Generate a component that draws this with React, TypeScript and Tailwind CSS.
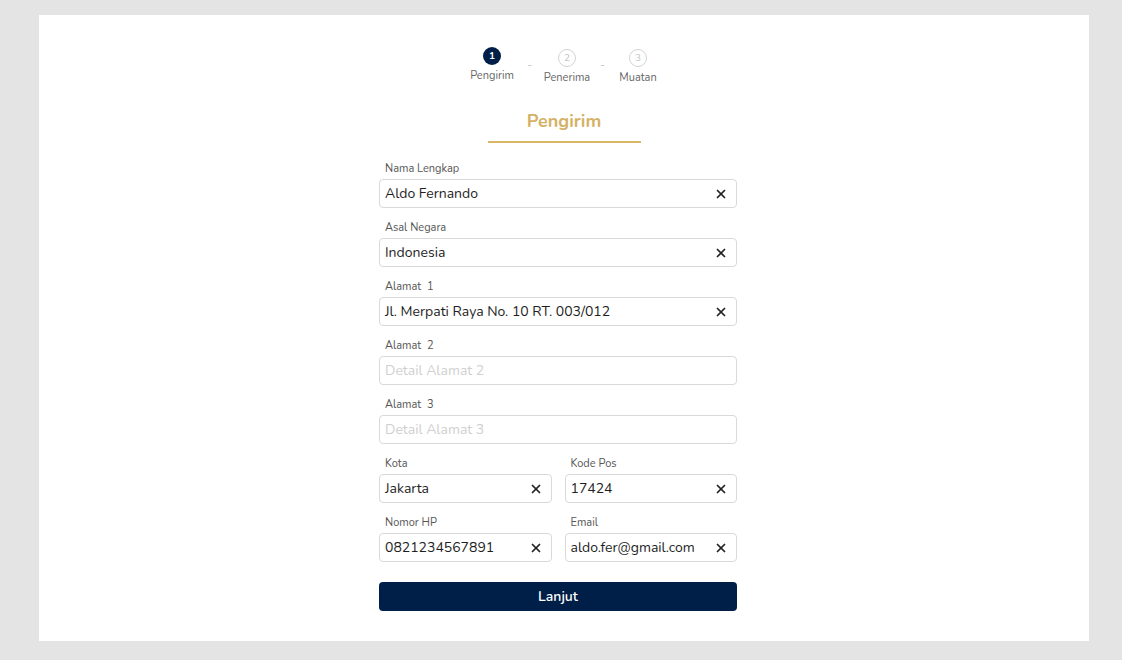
import { X } from 'lucide-react';

type Field = { label: string; value?: string; placeholder?: string };

const steps = [
  { n: 1, label: 'Pengirim', active: true },
  { n: 2, label: 'Penerima', active: false },
  { n: 3, label: 'Muatan', active: false },
];

function Input({ label, value, placeholder }: Field) {
  return (
    <div className="flex flex-col">
      <div className="h-[16px] whitespace-pre pl-[6px] text-[11px] leading-[16px] text-[#555]">{label}</div>
      <div className="mt-[2px] flex h-[29px] items-center rounded-[4px] border border-[#d9d9d9] bg-white pl-[5px] pr-[8px]">
        {value ? (
          <>
            <span className="flex-1 text-[14px] text-[#1e1e1e]">{value}</span>
            <X size={14} strokeWidth={3} className="text-[#222]" />
          </>
        ) : (
          <span className="flex-1 text-[14px] text-[#d0d0d0]">{placeholder}</span>
        )}
      </div>
    </div>
  );
}

export default function App() {
  return (
    <div className="min-h-[660px] w-full bg-[#e4e4e4] pl-[39px] pr-[33px] pt-[15px] pb-[19px] font-['Nunito','Lato',sans-serif]">
      <div className="flex h-[626px] flex-col items-center bg-white pt-[32px]">
        {/* Stepper */}
        <div className="ml-[2px] flex items-start">
          {steps.map((s, i) => (
            <div key={s.n} className="flex items-start">
              {i > 0 && (
                <div className={`${i === 1 ? 'w-[15px]' : 'w-[11px]'} pt-[11px] text-center text-[11px] text-[#c8c8c8]`}>-</div>
              )}
              <div className={`flex w-[60px] flex-col items-center ${s.active ? '' : 'mt-[2px]'}`}>
                {s.active ? (
                  <div className="flex h-[18px] w-[18px] items-center justify-center rounded-full bg-[#001f48] text-[10px] font-bold text-white">
                    {s.n}
                  </div>
                ) : (
                  <div className="flex h-[18px] w-[18px] items-center justify-center rounded-full border border-[#d4d4d4] text-[10px] text-[#c4c4c4]">
                    {s.n}
                  </div>
                )}
                <div className="mt-[4px] text-[11px] leading-[14px] text-[#666]">{s.label}</div>
              </div>
            </div>
          ))}
        </div>

        {/* Title */}
        <div className="mt-[24px] w-[153px] border-b-2 border-[#d8b766] pb-[8px] text-center text-[18px] font-bold leading-[24px] text-[#d4b265]">
          Pengirim
        </div>

        {/* Form */}
        <div className="mt-[18px] w-[370px] pr-[12px]">
          <div className="flex flex-col gap-[12px]">
            <Input label="Nama Lengkap" value="Aldo Fernando" />
            <Input label="Asal Negara" value="Indonesia" />
            <Input label="Alamat  1" value="Jl. Merpati Raya No. 10 RT. 003/012" />
            <Input label="Alamat  2" placeholder="Detail Alamat 2" />
            <Input label="Alamat  3" placeholder="Detail Alamat 3" />
            <div className="grid grid-cols-2 gap-[13px]">
              <Input label="Kota" value="Jakarta" />
              <Input label="Kode Pos" value="17424" />
            </div>
            <div className="grid grid-cols-2 gap-[13px]">
              <Input label="Nomor HP" value="0821234567891" />
              <Input label="Email" value="aldo.fer@gmail.com" />
            </div>
          </div>
          <button className="mt-[20px] flex h-[29px] w-full items-center justify-center rounded-[4px] bg-[#001f48] text-[14px] font-semibold text-white">
            Lanjut
          </button>
        </div>
      </div>
    </div>
  );
}
